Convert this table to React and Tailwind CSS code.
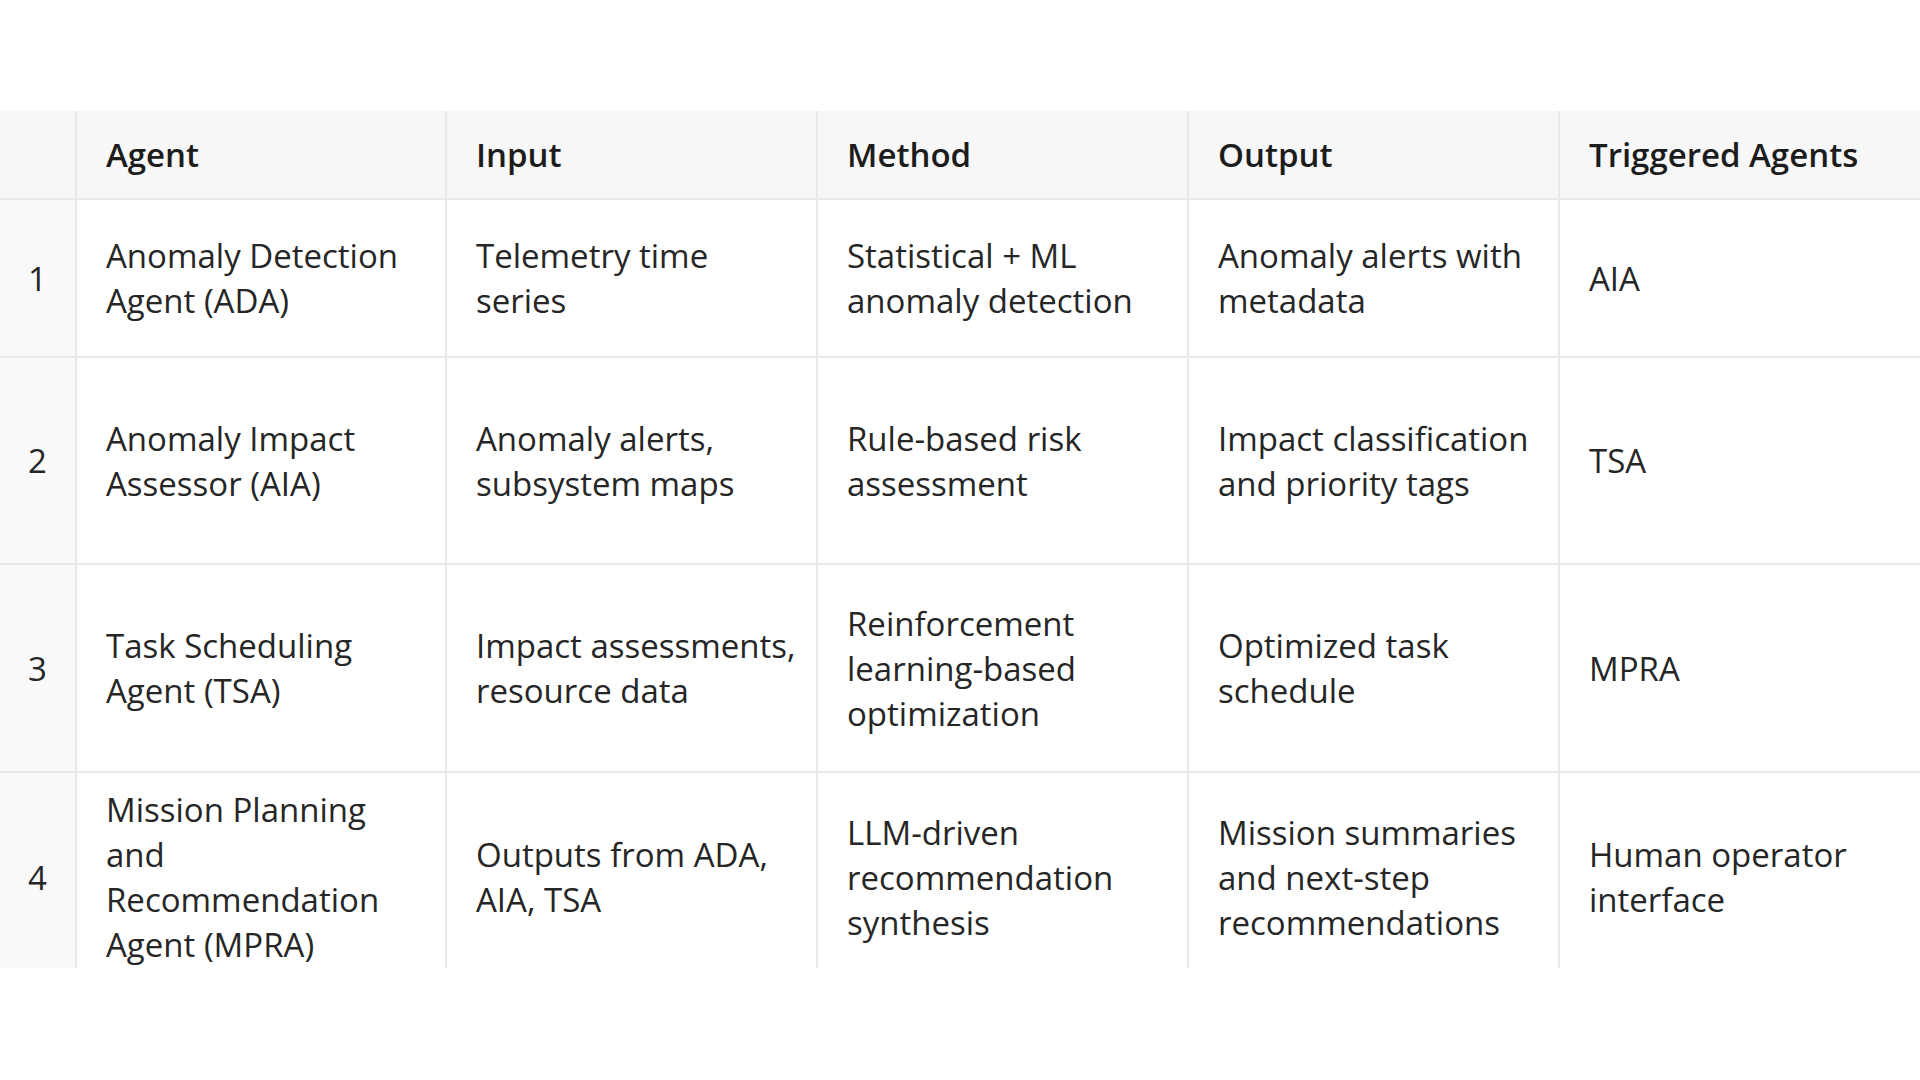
import React from 'react';

const headers = ['Agent', 'Input', 'Method', 'Output', 'Triggered Agents'];

const rows = [
    {
        h: 'h-[158px]',
        cells: [
            ['Anomaly Detection', 'Agent (ADA)'],
            ['Telemetry time', 'series'],
            ['Statistical + ML', 'anomaly detection'],
            ['Anomaly alerts with', 'metadata'],
            ['AIA'],
        ],
    },
    {
        h: 'h-[207px]',
        cells: [
            ['Anomaly Impact', 'Assessor (AIA)'],
            ['Anomaly alerts,', 'subsystem maps'],
            ['Rule-based risk', 'assessment'],
            ['Impact classification', 'and priority tags'],
            ['TSA'],
        ],
    },
    {
        h: 'h-[208px]',
        cells: [
            ['Task Scheduling', 'Agent (TSA)'],
            ['Impact assessments,', 'resource data'],
            ['Reinforcement', 'learning-based', 'optimization'],
            ['Optimized task', 'schedule'],
            ['MPRA'],
        ],
    },
    {
        h: 'h-[210px]',
        cells: [
            ['Mission Planning', 'and', 'Recommendation', 'Agent (MPRA)'],
            ['Outputs from ADA,', 'AIA, TSA'],
            ['LLM-driven', 'recommendation', 'synthesis'],
            ['Mission summaries', 'and next-step', 'recommendations'],
            ['Human operator', 'interface'],
        ],
    },
];

const App = () => {
    return (
        <div className="bg-white min-h-screen pt-[111px] font-['Segoe_UI','Open_Sans',sans-serif] text-[#262626]">
            {/* Table, clipped at the bottom like the screenshot */}
            <div className="h-[857px] overflow-hidden">
                <table className="table-fixed border-collapse w-[1931px] text-[33px] leading-[45px]">
                    <colgroup>
                        <col className="w-[76px]" />
                        <col className="w-[370px]" />
                        <col className="w-[371px]" />
                        <col className="w-[371px]" />
                        <col className="w-[371px]" />
                        <col className="w-[372px]" />
                    </colgroup>
                    <thead>
                        <tr className="h-[88px] bg-[#f7f7f7]">
                            <th className="border-r-2 border-b-2 border-[#e9e9e9]"></th>
                            {headers.map((t, i) => (
                                <th
                                    key={t}
                                    className={`px-[29px] text-left font-semibold text-[#1c1c1c] whitespace-nowrap border-b-2 border-[#e9e9e9] ${i < 4 ? 'border-r-2' : ''}`}
                                >
                                    {t}
                                </th>
                            ))}
                        </tr>
                    </thead>
                    <tbody>
                        {rows.map((row, r) => (
                            <tr key={r} className={row.h}>
                                <td className="bg-[#f9f9f9] text-center border-r-2 border-b-2 border-[#e9e9e9]">{r + 1}</td>
                                {row.cells.map((lines, i) => (
                                    <td
                                        key={i}
                                        className={`px-[29px] align-middle whitespace-nowrap border-b-2 border-[#e9e9e9] ${i < 4 ? 'border-r-2' : ''}`}
                                    >
                                        {lines.map((l, k) => (
                                            <div key={k}>{l}</div>
                                        ))}
                                    </td>
                                ))}
                            </tr>
                        ))}
                    </tbody>
                </table>
            </div>
        </div>
    );
};

export default App;
